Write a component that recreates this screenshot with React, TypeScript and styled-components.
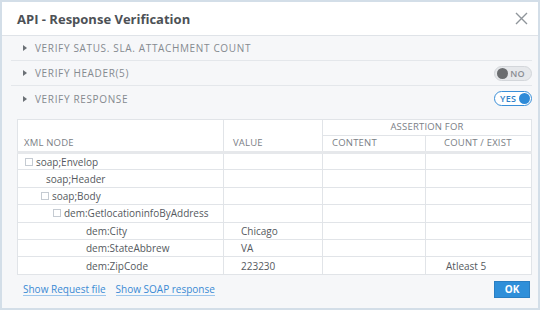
import React from "react";
import styled, { createGlobalStyle } from "styled-components";

const Global = createGlobalStyle`
  html, body { margin: 0; padding: 0; background: #ffffff; }
  body { font-family: "Open Sans", "Liberation Sans", sans-serif; }
  * { box-sizing: border-box; }
`;

const Dialog = styled.div`
  width: 540px;
  height: 310px;
  border: 2px solid #d3dee8;
  background: #f6f7f9;
  display: flex;
  flex-direction: column;
`;

const Header = styled.div`
  height: 34px;
  background: #ffffff;
  border-bottom: 1px solid #dfe3e8;
  display: flex;
  align-items: center;
  justify-content: space-between;
  padding: 0 9px 0 15px;
  flex-shrink: 0;
`;

const Title = styled.div`
  font-size: 13px;
  font-weight: 700;
  color: #4d5156;
`;

const Close = styled.div`
  width: 16px;
  height: 16px;
  display: flex;
  align-items: center;
  justify-content: center;
`;

const Sections = styled.div`
  padding: 0 6px 0 9px;
  display: flex;
  flex-direction: column;
`;

const Section = styled.div<{ $last?: boolean }>`
  height: 25px;
  display: flex;
  align-items: center;
  justify-content: space-between;
  border-bottom: ${(p) => (p.$last ? "none" : "1px solid #e4e7eb")};
  padding: 0 0 0 12px;
`;

const SectionLabel = styled.div`
  display: flex;
  align-items: center;
  gap: 8px;
  font-size: 10px;
  letter-spacing: 0.65px;
  color: #858a90;
  text-transform: uppercase;
`;

const Caret = styled.span`
  width: 0;
  height: 0;
  border-top: 3.5px solid transparent;
  border-bottom: 3.5px solid transparent;
  border-left: 4px solid #6b7076;
`;

const Toggle = styled.div<{ $on?: boolean }>`
  width: 38px;
  height: 15px;
  border-radius: 8px;
  display: flex;
  align-items: center;
  flex-direction: ${(p) => (p.$on ? "row-reverse" : "row")};
  justify-content: space-between;
  padding: 0 1px 0 2px;
  background: ${(p) => (p.$on ? "#ffffff" : "#e6e8eb")};
  border: 1px solid ${(p) => (p.$on ? "#3a8fd8" : "#d3d6da")};
`;

const Knob = styled.span<{ $on?: boolean }>`
  width: 11px;
  height: 11px;
  border-radius: 50%;
  background: ${(p) => (p.$on ? "#2e8bd8" : "#6b6d70")};
`;

const ToggleText = styled.span<{ $on?: boolean }>`
  font-size: 9px;
  font-weight: 600;
  color: ${(p) => (p.$on ? "#2e7fc8" : "#8a8e93")};
  letter-spacing: 0.3px;
  padding: ${(p) => (p.$on ? "0 0 0 3px" : "0 5px 0 0")};
`;

const TableWrap = styled.div`
  margin: 8px 8px 0 15px;
`;

const Table = styled.table`
  width: 514px;
  border-collapse: collapse;
  background: #ffffff;
  border: 1px solid #c9d6e1;
  table-layout: fixed;
`;

const Th = styled.th<{ $align?: string; $pad?: number; $thick?: boolean }>`
  font-size: 9.5px;
  font-weight: 400;
  color: #7b8086;
  text-transform: uppercase;
  letter-spacing: 0.2px;
  text-align: ${(p) => p.$align || "left"};
  padding: 0 0 0 ${(p) => p.$pad ?? 6}px;
  border: 1px solid #e1e4e8;
  border-bottom: ${(p) => (p.$thick ? "3px solid #e6e8eb" : "1px solid #e1e4e8")};
  vertical-align: bottom;
  padding-bottom: 2px;
  height: 14px;
  line-height: 13px;
`;

const Td = styled.td<{ $pad?: number }>`
  font-size: 10px;
  color: #55595e;
  height: 17.4px;
  padding: 0 0 0 ${(p) => p.$pad ?? 8}px;
  border: 1px solid #e1e4e8;
  white-space: nowrap;
  overflow: hidden;
  line-height: 14px;
`;

const NodeCell = styled.div<{ $indent: number }>`
  display: flex;
  align-items: center;
  padding-left: ${(p) => p.$indent}px;
  gap: 3px;
`;

const Box = styled.span`
  width: 8px;
  height: 8px;
  border: 1px solid #c5cbd2;
  background: #ffffff;
  flex-shrink: 0;
`;

const Footer = styled.div`
  display: flex;
  align-items: center;
  justify-content: space-between;
  padding: 6px 8px 0 21px;
`;

const Links = styled.div`
  display: flex;
  gap: 10px;
`;

const Link = styled.a`
  font-size: 10px;
  color: #3a8ad4;
  text-decoration: none;
  border-bottom: 1px solid #9cc6ec;
  line-height: 12px;
  cursor: pointer;
`;

const OkButton = styled.button`
  width: 36px;
  height: 17px;
  background: #2f8fd9;
  border: 1px solid #2a7ec2;
  color: #ffffff;
  font-family: "Open Sans", "Liberation Sans", sans-serif;
  font-size: 10px;
  font-weight: 700;
  padding: 0;
`;

type Row = { node: string; indent: number; box?: boolean; value?: string; count?: string };

const rows: Row[] = [
  { node: "soap;Envelop", indent: 0, box: true },
  { node: "soap;Header", indent: 21 },
  { node: "soap;Body", indent: 16, box: true },
  { node: "dem:GetlocationinfoByAddress", indent: 28, box: true },
  { node: "dem:City", indent: 61, value: "Chicago" },
  { node: "dem:StateAbbrew", indent: 61, value: "VA" },
  { node: "dem:ZipCode", indent: 61, value: "223230", count: "Atleast 5" },
];

export default function App() {
  return (
    <>
      <Global />
      <Dialog>
        <Header>
          <Title>API - Response Verification</Title>
          <Close>
            <svg width="13" height="13" viewBox="0 0 13 13">
              <path d="M1 1 L12 12 M12 1 L1 12" stroke="#8f959b" strokeWidth="1.4" fill="none" />
            </svg>
          </Close>
        </Header>
        <Sections>
          <Section>
            <SectionLabel>
              <Caret />
              Verify Satus. SLA. Attachment Count
            </SectionLabel>
          </Section>
          <Section>
            <SectionLabel>
              <Caret />
              Verify Header(5)
            </SectionLabel>
            <Toggle>
              <Knob />
              <ToggleText>NO</ToggleText>
            </Toggle>
          </Section>
          <Section $last>
            <SectionLabel>
              <Caret />
              Verify Response
            </SectionLabel>
            <Toggle $on>
              <Knob $on />
              <ToggleText $on>YES</ToggleText>
            </Toggle>
          </Section>
        </Sections>
        <TableWrap>
          <Table>
            <colgroup>
              <col style={{ width: 206 }} />
              <col style={{ width: 99 }} />
              <col style={{ width: 103 }} />
              <col style={{ width: 106 }} />
            </colgroup>
            <thead>
              <tr>
                <Th rowSpan={2} $thick>XML Node</Th>
                <Th rowSpan={2} $thick $pad={9}>Value</Th>
                <Th colSpan={2} $align="center" $pad={0}>Assertion For</Th>
              </tr>
              <tr>
                <Th $thick $pad={9}>Content</Th>
                <Th $thick $pad={18}>Count / Exist</Th>
              </tr>
            </thead>
            <tbody>
              {rows.map((r) => (
                <tr key={r.node}>
                  <Td $pad={7}>
                    <NodeCell $indent={r.indent}>
                      {r.box && <Box />}
                      <span>{r.node}</span>
                    </NodeCell>
                  </Td>
                  <Td $pad={17}>{r.value || ""}</Td>
                  <Td />
                  <Td $pad={20}>{r.count || ""}</Td>
                </tr>
              ))}
            </tbody>
          </Table>
        </TableWrap>
        <Footer>
          <Links>
            <Link>Show Request file</Link>
            <Link>Show SOAP response</Link>
          </Links>
          <OkButton>OK</OkButton>
        </Footer>
      </Dialog>
    </>
  );
}
